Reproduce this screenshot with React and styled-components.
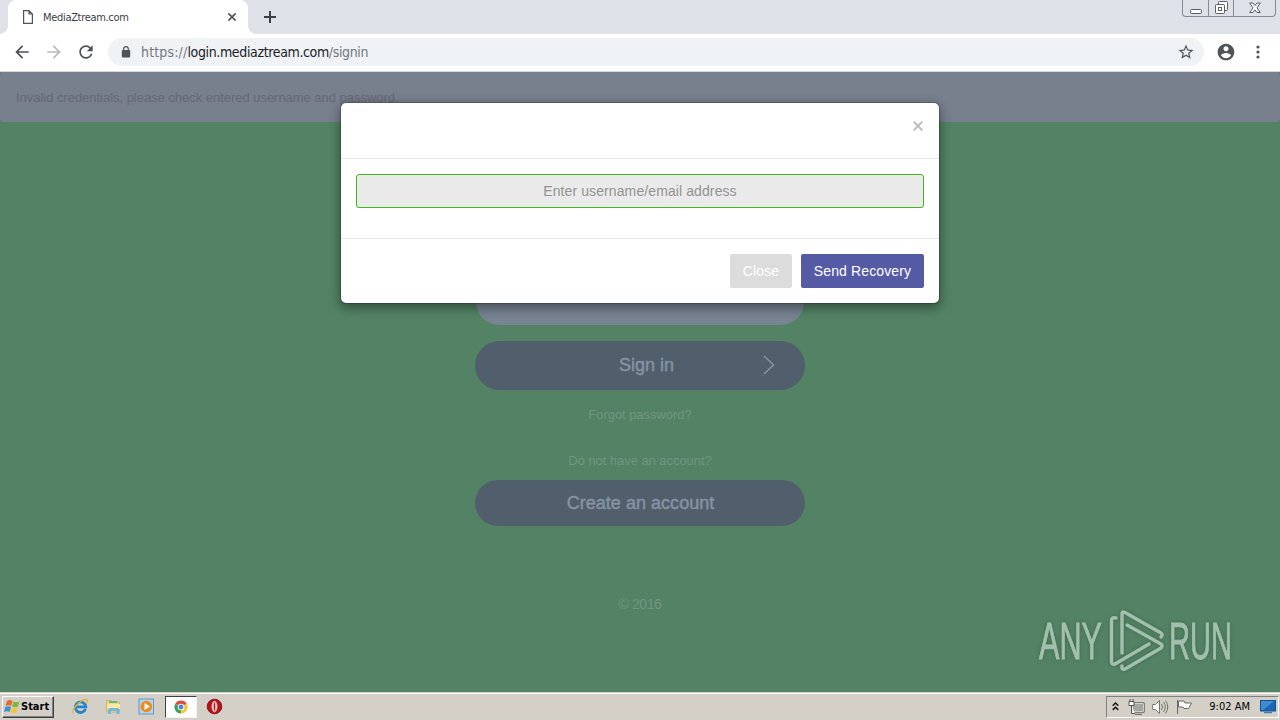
import React from 'react';
import styled, { createGlobalStyle } from 'styled-components';

function App () {

    return(
        <Screen>
            <GlobalStyle />
            <TabStrip>
                <Tab>
                    <svg width="10" height="14" viewBox="0 0 10 14" fill="none" stroke="#505357" strokeWidth="1.2"><path d="M.6.6H6L9.4 4V13.4H.6ZM6 .6V4H9.4" /></svg>
                    <TabTitle>MediaZtream.com</TabTitle>
                    <svg width="8" height="8" viewBox="0 0 8 8" stroke="#505357" strokeWidth="1.6"><path d="M.4.4L7.6 7.6M7.6.4L.4 7.6" /></svg>
                </Tab>
                <NewTab width="12" height="12" viewBox="0 0 12 12" stroke="#3c4043" strokeWidth="2"><path d="M6 0V12M0 6H12" /></NewTab>
                <WindowButtons>
                    <WindowButton $width="25px"><svg width="12" height="5" viewBox="0 0 12 5"><rect x=".5" y=".5" width="11" height="4" rx="1" fill="#fff" stroke="#5a5d68" /></svg></WindowButton>
                    <WindowButton $width="25px"><svg width="13" height="13" viewBox="0 0 13 13" fill="#fff" stroke="#5a5d68"><rect x="3.5" y=".5" width="9" height="9" rx="1" /><rect x=".5" y="3.5" width="9" height="9" rx="1" /><rect x="3.5" y="6.5" width="3" height="3" /></svg></WindowButton>
                    <WindowButton $width="42px"><svg width="12" height="12" viewBox="0 0 12 12" fill="#fff" stroke="#5a5d68"><path d="M.7 1H4L6 3.5 8 1H11.3L8 5.8 11.3 10.5H8L6 8 4 10.5H.7L4 5.8Z" /></svg></WindowButton>
                </WindowButtons>
            </TabStrip>
            <Toolbar>
                <NavIcon viewBox="0 0 24 24" fill="#4d5054"><path d="M20 11H7.83l5.59-5.59L12 4l-8 8 8 8 1.41-1.41L7.83 13H20v-2z" /></NavIcon>
                <NavIcon viewBox="0 0 24 24" fill="#b8babd"><path d="M12 4l-1.41 1.41L16.17 11H4v2h12.17l-5.58 5.59L12 20l8-8z" /></NavIcon>
                <NavIcon viewBox="0 0 24 24" fill="#4d5054"><path d="M17.65 6.35C16.2 4.9 14.21 4 12 4c-4.42 0-7.99 3.58-7.99 8s3.57 8 7.99 8c3.73 0 6.84-2.55 7.73-6h-2.08c-.82 2.33-3.04 4-5.65 4-3.31 0-6-2.69-6-6s2.69-6 6-6c1.66 0 3.14.69 4.22 1.78L13 11h7V4l-2.35 2.35z" /></NavIcon>
                <AddressBar>
                    <svg width="10" height="12" viewBox="0 0 10 12"><rect x=".8" y="4" width="8.4" height="7.6" rx="1" fill="#505357" /><path d="M2.7 5V3a2.3 2.3 0 0 1 4.6 0V5" fill="none" stroke="#505357" strokeWidth="1.2" /></svg>
                    <Url><UrlPart $spacing="0.16px">https://</UrlPart><UrlPart $strong $spacing="-0.36px">login.mediaztream.com</UrlPart><UrlPart $spacing="-0.37px">/signin</UrlPart></Url>
                    <svg width="18" height="18" viewBox="0 0 24 24" fill="#505357"><path d="M22 9.24l-7.19-.62L12 2 9.19 8.63 2 9.24l5.46 4.73L5.82 21 12 17.27 18.18 21l-1.63-7.03L22 9.24zM12 15.4l-3.76 2.27 1-4.28-3.32-2.88 4.38-.38L12 6.1l1.71 4.04 4.38.38-3.32 2.88 1 4.28L12 15.4z" /></svg>
                </AddressBar>
                <Avatar viewBox="0 0 24 24" fill="#505357"><path d="M12 2C6.48 2 2 6.48 2 12s4.48 10 10 10 10-4.48 10-10S17.52 2 12 2zm0 3.2c1.66 0 3 1.34 3 3s-1.34 3-3 3-3-1.34-3-3 1.34-3 3-3zm0 14.2c-2.5 0-4.71-1.28-6-3.22.03-1.99 4-3.08 6-3.08s5.97 1.09 6 3.08c-1.29 1.94-3.5 3.22-6 3.22z" /></Avatar>
                <svg width="4" height="14" viewBox="0 0 4 14" fill="#505357"><circle cx="2" cy="2" r="1.6" /><circle cx="2" cy="7" r="1.6" /><circle cx="2" cy="12" r="1.6" /></svg>
            </Toolbar>
            <Page>
                <Alert>Invalid credentials, please check entered username and password.</Alert>
                <Login>
                    <PasswordField />
                    <LoginButton $height="49px">
                        <LoginLabel $indent="13px">Sign in</LoginLabel>
                        <Chevron width="12" height="20" viewBox="0 0 12 20" fill="none" stroke="#8995a2" strokeWidth="1.4"><path d="M1 1L10.5 10 1 19" /></Chevron>
                    </LoginButton>
                    <Note $top="17px" $spacing="-0.05px">Forgot password?</Note>
                    <Note $top="30px" $spacing="-0.05px">Do not have an account?</Note>
                    <LoginButton $height="46px" $top="11px"><LoginLabel $spacing="0.03px">Create an account</LoginLabel></LoginButton>
                    <Note $top="70px" $size="14px" $spacing="-0.45px">© 2016</Note>
                </Login>
                <Modal>
                    <ModalHeader>
                        <svg width="10" height="10" viewBox="0 0 10 10" stroke="#bdbdbd" strokeWidth="2"><path d="M.8.8L9.2 9.2M9.2.8L.8 9.2" /></svg>
                    </ModalHeader>
                    <ModalBody>
                        <Input placeholder="Enter username/email address" />
                    </ModalBody>
                    <ModalFooter>
                        <Button $width="62px">Close</Button>
                        <Button $primary $width="123px">Send Recovery</Button>
                    </ModalFooter>
                </Modal>
                <Watermark />
            </Page>
            <Taskbar />
        </Screen>
    )
};

function Watermark () {
    return(
        <WatermarkSvg width="210" height="70" viewBox="1035 605 210 70">
            <g fill="#a3c0ae" stroke="#a3c0ae" strokeWidth=".5" fontFamily="'Liberation Sans', sans-serif" fontSize="28">
                <text transform="translate(1039 659) scale(1 1.88)" textLength="63" lengthAdjust="spacingAndGlyphs">ANY</text>
                <text transform="translate(1169 659) scale(1 1.88)" textLength="63" lengthAdjust="spacingAndGlyphs">RUN</text>
            </g>
            <g fill="none" stroke="#a3c0ae" strokeWidth="3.4" strokeLinecap="round" strokeLinejoin="round">
                <path d="M1122 653V614Q1122 611 1125 612.5L1161 633Q1163 635 1161 637" />
                <path d="M1116 618Q1111 617 1111.5 621V662Q1112 665 1115 664L1149 644" />
                <path d="M1127 625L1161 644Q1163 646 1161 648L1125 669Q1121 670 1122 666" />
            </g>
        </WatermarkSvg>
    )
}

function Taskbar () {
    return(
        <TaskbarDiv>
            <StartButton>
                <svg width="17" height="17" viewBox="0 0 17 17">
                    <path d="M3 3Q6 1 8.5 3L7.2 8Q4.5 6.5 1.5 8Z" fill="#e76b2c" />
                    <path d="M9.5 3.5Q12.5 5 15.5 3.5L14 8.5Q11 10 8 8.5Z" fill="#78b83d" />
                    <path d="M1.3 9Q4.5 7.5 7 9L5.7 14Q3 12.5 0 14Z" fill="#3c91cf" />
                    <path d="M8 9.5Q11 11 13.7 9.5L12.3 14.5Q9.5 16 6.7 14.5Z" fill="#f5c33b" />
                </svg>
                Start
            </StartButton>
            <Launcher>
                <svg width="17" height="17" viewBox="0 0 17 17" fill="none">
                    <path d="M13.5 11A5.3 5.3 0 1 1 13.8 8.8H4" stroke="#2384cb" strokeWidth="2.8" />
                    <path d="M1.5 15.5C-1.5 12 9 1 14.5 1.5C16.5 2 15 4.5 14 5.5" stroke="#e3b437" strokeWidth="1.3" />
                </svg>
            </Launcher>
            <Launcher>
                <svg width="17" height="17" viewBox="0 0 17 17">
                    <path d="M1.5 2.5H6L7 4H14.5V14H1.5Z" fill="#eed982" stroke="#cdb45d" />
                    <path d="M4 3H12V5H4Z" fill="#6bb58c" />
                    <path d="M2 6H15V11H2Z" fill="#f8eaa6" />
                    <path d="M3 16V11.5Q3 10 5 10H12.5Q14.5 10 14.5 12V16H11.5V13H6V16Z" fill="#72b9df" />
                </svg>
            </Launcher>
            <Launcher>
                <svg width="17" height="17" viewBox="0 0 17 17">
                    <rect x="1" y="1" width="14.5" height="15" fill="#b5d5ec" stroke="#5b9bca" />
                    <circle cx="8.3" cy="8.5" r="5.8" fill="#ef8a1d" />
                    <path d="M6.5 5L12 8.5 6.5 12Z" fill="#fff" />
                </svg>
            </Launcher>
            <Launcher $active>
                <svg width="14" height="14" viewBox="0 0 16 16">
                    <path d="M8 8L1.5 4.2A7.5 7.5 0 0 1 14.5 4.2Z" fill="#df4b3e" />
                    <path d="M8 8L14.5 4.2A7.5 7.5 0 0 1 8 15.5Z" fill="#f4ca35" />
                    <path d="M8 8V15.5A7.5 7.5 0 0 1 1.5 4.2Z" fill="#42a159" />
                    <circle cx="8" cy="8" r="3.7" fill="#fff" />
                    <circle cx="8" cy="8" r="2.8" fill="#4b83d5" />
                </svg>
            </Launcher>
            <Launcher>
                <svg width="17" height="17" viewBox="0 0 17 17">
                    <circle cx="8.5" cy="8.5" r="7.3" fill="#b3151c" stroke="#8f171b" />
                    <ellipse cx="8.5" cy="8.5" rx="2.6" ry="5.3" fill="#f3e6e3" stroke="#e6a19d" strokeWidth=".8" />
                    <ellipse cx="8.5" cy="8.5" rx=".8" ry="4.3" fill="#b3151c" />
                </svg>
            </Launcher>
            <Tray>
                <svg width="7" height="9" viewBox="0 0 7 9" fill="none" stroke="#161616" strokeWidth="1.5"><path d="M.7 3.7L3.5 1 6.3 3.7M.7 7.9L3.5 5.2 6.3 7.9" /></svg>
                <svg width="17" height="16" viewBox="0 0 17 16">
                    <rect x="4.5" y="4.5" width="11" height="8" fill="#a5a5a1" stroke="#fff" />
                    <path d="M3.8 3.8H16.2V13.2H3.8ZM7 15.3H14" fill="none" stroke="#5c5c59" />
                    <path d="M1 2.5H6V6.5H1ZM2 0V2.5M5 0V2.5M3.5 6.5V14.5H7" fill="#fff" stroke="#555" />
                </svg>
                <svg width="17" height="16" viewBox="0 0 17 16" fill="none" stroke="#77756f">
                    <path d="M.7 5.5H3.5L7.5 1.5V14.5L3.5 10.5H.7Z" fill="#fff" />
                    <path d="M9.5 5Q11.5 8 9.5 11M11.5 3Q15 8 11.5 13M13.5 1.5Q18 8 13.5 14.5" />
                </svg>
                <svg width="17" height="16" viewBox="0 0 17 16"><path d="M1.5 1V15M2.5 2H8L9 4H15.5L12.5 9.5H8L7 8H2.5Z" fill="#fff" stroke="#6a6964" /></svg>
                <Clock>9:02 AM</Clock>
                <svg width="16" height="14" viewBox="0 0 16 14"><rect x=".5" y=".5" width="15" height="10.5" fill="#1f65b6" stroke="#174f91" /><path d="M1 1H14L3 10H1Z" fill="#3d8bd4" /><path d="M4 12.5H12" stroke="#477ba9" strokeWidth="1.5" /></svg>
            </Tray>
        </TaskbarDiv>
    )
}

const GlobalStyle = createGlobalStyle`
    *{
        box-sizing:border-box;
    }

    body{
        margin:0;
        overflow:hidden;
    }

    svg{
        display:block;
        flex:none;
    }
`
const Screen = styled.div`
    width:1280px;
    height:720px;
    display:flex;
    flex-direction:column;
    font-family:'Liberation Sans', sans-serif;
    background:#fff;
`
const TabStrip = styled.div`
    height:34px;
    display:flex;
    align-items:flex-start;
    background:#dee1e8;
`
const Tab = styled.div`
    width:240px;
    height:34px;
    margin-left:8px;
    padding:0 12px 0 15px;
    display:flex;
    align-items:center;
    background:#fff;
    border-radius:8px 8px 0 0;
    position:relative;

    &::before, &::after{
        content:'';
        position:absolute;
        bottom:0;
        left:-8px;
        width:8px;
        height:8px;
        background:radial-gradient(circle at 0 0, #dee1e8 7.5px, #fff 8px);
    }

    &::after{
        left:auto;
        right:-8px;
        background:radial-gradient(circle at 100% 0, #dee1e8 7.5px, #fff 8px);
    }
`
const TabTitle = styled.span`
    flex:1;
    margin-left:10px;
    color:#3c4043;
    font-family:'DejaVu Sans Condensed', 'DejaVu Sans', sans-serif;
    font-size:11px;
    letter-spacing:-0.32px;
    white-space:nowrap;
`
const NewTab = styled.svg`
    margin:11px 0 0 16px;
`
const WindowButtons = styled.div`
    height:17px;
    margin:0 4px 0 auto;
    display:flex;
    border:1px solid #858a98;
    border-top:0;
    border-radius:0 0 4px 4px;
`
const WindowButton = styled.div`
    width:${props => props.$width};
    display:flex;
    justify-content:center;
    align-items:flex-end;
    padding-bottom:2px;

    & + &{
        border-left:1px solid #858a98;
    }
`
const Toolbar = styled.div`
    height:38px;
    display:flex;
    align-items:center;
    padding:0 20px 2px 12px;
    border-bottom:1px solid #d5d7da;
`
const NavIcon = styled.svg`
    width:20px;
    height:20px;
    margin-right:12px;
`
const AddressBar = styled.div`
    flex:1;
    height:28px;
    display:flex;
    align-items:center;
    padding:0 9px 0 13px;
    border-radius:14px;
    background:#eff3f6;
`
const Url = styled.div`
    flex:1;
    display:flex;
    margin-left:10px;
    font-family:'DejaVu Sans Condensed', 'DejaVu Sans', sans-serif;
    font-size:14px;
`
const UrlPart = styled.span`
    color:${props => props.$strong ? '#202124' : '#74787d'};
    letter-spacing:${props => props.$spacing};
`
const Avatar = styled.svg`
    width:20px;
    height:20px;
    margin:0 20px 0 12px;
`
const Page = styled.div`
    height:620px;
    position:relative;
    background:#538364;
`
const Alert = styled.div`
    height:50px;
    padding:18px 16px;
    border-radius:4px;
    background:#787f8d;
    color:#666877;
    font-size:13px;
    line-height:16px;
    letter-spacing:-0.03px;
`
const Login = styled.div`
    width:330px;
    margin:0 auto;
    padding-top:157px;
    display:flex;
    flex-direction:column;
    align-items:center;
`
const PasswordField = styled.div`
    width:328px;
    height:46px;
    margin-bottom:16px;
    border-radius:23px;
    background:#788492;
`
const LoginButton = styled.div`
    width:330px;
    height:${props => props.$height};
    margin-top:${props => props.$top || '0'};
    display:flex;
    align-items:center;
    justify-content:center;
    position:relative;
    border-radius:25px;
    background:#515f6d;
`
const LoginLabel = styled.span`
    color:#8793a2;
    font-size:18px;
    letter-spacing:${props => props.$spacing || '0'};
    -webkit-text-stroke:0.4px #8793a2;
    padding-left:${props => props.$indent || '1px'};
`
const Chevron = styled.svg`
    position:absolute;
    top:14px;
    right:30px;
`
const Note = styled.div`
    margin-top:${props => props.$top};
    color:#719582;
    font-size:${props => props.$size || '13px'};
    line-height:16px;
    letter-spacing:${props => props.$spacing};
`
const Modal = styled.div`
    position:absolute;
    top:30px;
    left:340px;
    width:600px;
    background:#fff;
    background-clip:padding-box;
    border:1px solid rgba(0,0,0,0.2);
    border-radius:6px;
    box-shadow:0 4px 12px rgba(0,0,0,0.4);
`
const ModalHeader = styled.div`
    height:56px;
    display:flex;
    justify-content:flex-end;
    padding:18px 16px 0 0;
    border-bottom:1px solid #e5e5e5;
`
const ModalBody = styled.div`
    height:79px;
    padding:15px;
`
const Input = styled.input`
    display:block;
    width:100%;
    height:34px;
    border:1px solid #3fb620;
    border-radius:3px;
    background:#eaeaea;
    font-family:'Liberation Sans', sans-serif;
    font-size:14px;
    letter-spacing:0.1px;
    text-align:center;

    &::placeholder{
        color:#929292;
    }
`
const ModalFooter = styled.div`
    display:flex;
    justify-content:flex-end;
    gap:9px;
    padding:15px;
    border-top:1px solid #e5e5e5;
`
const Button = styled.button`
    width:${props => props.$width};
    height:34px;
    padding:0;
    border:0;
    border-radius:2px;
    background:${props => props.$primary ? '#555aa5' : '#dcdcdc'};
    color:#fff;
    font-family:'Liberation Sans', sans-serif;
    font-size:14px;
    letter-spacing:0.13px;
`
const WatermarkSvg = styled.svg`
    position:absolute;
    left:1035px;
    top:533px;
    filter:drop-shadow(0 0 2px rgba(40,70,50,0.45));
`
const TaskbarDiv = styled.div`
    height:28px;
    display:flex;
    align-items:center;
    padding:0 1px 0 2px;
    border-top:1px solid #d4d0c8;
    box-shadow:inset 0 1px #fff;
    background:#d4d0c8;
`
const StartButton = styled.div`
    width:52px;
    height:22px;
    margin-right:16px;
    padding-left:1px;
    display:flex;
    align-items:center;
    border:1px solid;
    border-color:#fff #404040 #404040 #fff;
    box-shadow:inset -1px -1px #808080;
    font-family:'DejaVu Sans Condensed', 'DejaVu Sans', sans-serif;
    font-size:11px;
    font-weight:bold;
`
const Launcher = styled.div`
    width:20px;
    height:22px;
    margin-right:13px;
    display:flex;
    align-items:center;
    justify-content:center;
    ${props => props.$active && `
        width:32px;
        margin-left:-4px;
        margin-right:7px;
        background:#fff;
        border:1px solid;
        border-color:#404040 #f4f2ee #f4f2ee #404040;
    `}
`
const Tray = styled.div`
    width:173px;
    height:22px;
    margin-left:auto;
    padding:0 2px 0 5px;
    display:flex;
    align-items:center;
    gap:7px;
    border:1px solid;
    border-color:#808080 #fff #fff #808080;

    svg:nth-of-type(2){
        margin-left:2px;
    }
`
const Clock = styled.span`
    flex:1;
    text-align:right;
    padding-right:3px;
    font-family:'DejaVu Sans Condensed', 'DejaVu Sans', sans-serif;
    font-size:11px;
    white-space:nowrap;
`
export default App;
